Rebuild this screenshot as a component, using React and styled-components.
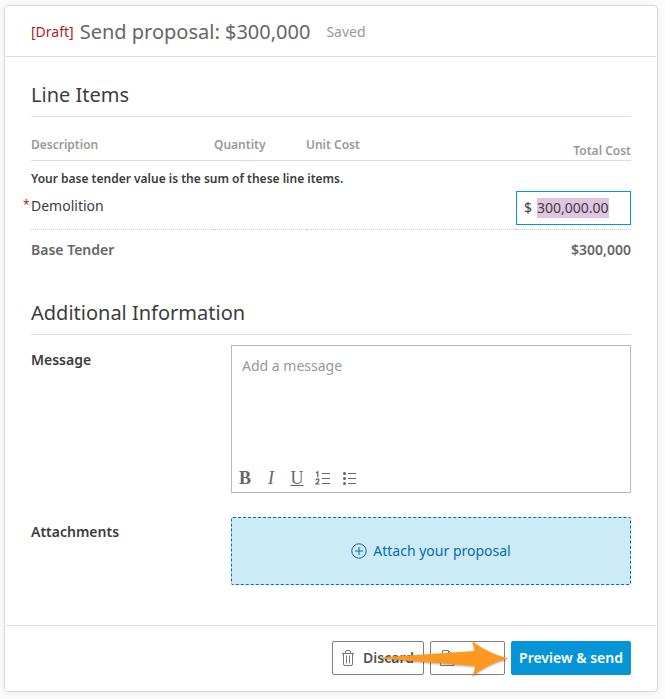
import React, { useEffect, useRef } from 'react'
import styled, { createGlobalStyle, css } from 'styled-components';

const GlobalStyle = createGlobalStyle`
  * {
    box-sizing: border-box;
  }
  body {
    margin: 0;
    background: #fbfbfc;
    color: #3c3c3c;
    font-family: "Noto Sans", "Open Sans", sans-serif;
    font-size: 14px;
    line-height: 20px;
  }
  button, input, textarea {
    font-family: inherit;
    font-size: inherit;
    line-height: inherit;
    color: inherit;
  }
`

const TrashIcon = () => (
    <svg width="12" height="16" viewBox="0 0 12 16" fill="none" stroke="#777" aria-hidden="true">
        <path d="M0 3.5h12M3.5 3.5v-1.5q0-1.5 1.5-1.5h2q1.5 0 1.5 1.5v1.5M1.5 3.5v10.5q0 1.5 1.5 1.5h6q1.5 0 1.5-1.5v-10.5M4.5 5.5v8M7.5 5.5v8" />
    </svg>
)

const SaveIcon = () => (
    <svg width="15" height="16" viewBox="0 0 15 16" fill="none" stroke="#777" aria-hidden="true">
        <path d="M2.5 10v-9.5h6l4 4v5.5M8.5 0.5v4h4M0.5 10.5h2.5l1 2h6l1-2h3v5h-13.5z" />
    </svg>
)

const PlusIcon = () => (
    <svg width="16" height="16" viewBox="0 0 16 16" fill="none" stroke="currentColor" aria-hidden="true">
        <circle cx="8" cy="8" r="7.2" />
        <path d="M8 4v8M4 8h8" />
    </svg>
)

const NumberedIcon = () => (
    <svg width="16" height="14" viewBox="0 0 16 14" fill="none" stroke="#666" aria-hidden="true">
        <path strokeWidth="1.3" d="M1 2l1.8-1.2v5.4M0.9 9.3q0.2-1.4 1.6-1.4t1.5 1.2q0 0.9-1.2 2l-1.8 1.8h3.4" />
        <path d="M7 2.500h8M7 7.500h8M7 12.500h8" />
    </svg>
)

const BulletIcon = () => (
    <svg width="16" height="14" viewBox="0 0 16 14" fill="none" stroke="#666" aria-hidden="true">
        <path d="M7 2.500h8M7 7.500h8M7 12.500h8" />
        <g fill="#666" stroke="none">
            <circle cx="3.500" cy="2.500" r="1.500" />
            <circle cx="3.500" cy="7.500" r="1.500" />
            <circle cx="3.500" cy="12.400" r="1.500" />
        </g>
    </svg>
)

const App = () => {
    const amount = useRef(null);

    useEffect(() => {
        amount.current.focus();
        amount.current.select();
    }, []);

    return (
        <>
            <GlobalStyle />
            <Card>
                <Header>
                    <Draft>[Draft]</Draft>
                    <Title>Send proposal: $300,000</Title>
                    <Saved>Saved</Saved>
                </Header>
                <Content>
                    <SectionTitle>Line Items</SectionTitle>
                    <Table>
                        <thead>
                            <tr>
                                <HeadCell $width="183px">Description</HeadCell>
                                <HeadCell $width="92px">Quantity</HeadCell>
                                <HeadCell>Unit Cost</HeadCell>
                                <HeadCell $width="115px" $total>Total Cost</HeadCell>
                            </tr>
                        </thead>
                        <tbody>
                            <tr>
                                <NoteCell colSpan="4">Your base tender value is the sum of these line items.</NoteCell>
                            </tr>
                            <tr>
                                <ItemCell colSpan="3">
                                    <Required>*</Required>
                                    <label htmlFor="demolition">Demolition</label>
                                </ItemCell>
                                <AmountCell>
                                    <AmountBox>
                                        <span>$</span>
                                        <AmountInput id="demolition" ref={amount} defaultValue="300,000.00" />
                                    </AmountBox>
                                </AmountCell>
                            </tr>
                        </tbody>
                        <tfoot>
                            <tr>
                                <TotalCell colSpan="3">Base Tender</TotalCell>
                                <TotalCell $right>$300,000</TotalCell>
                            </tr>
                        </tfoot>
                    </Table>
                    <SectionTitle>Additional Information</SectionTitle>
                    <Fields>
                        <Field>
                            <FieldLabel htmlFor="message">Message</FieldLabel>
                            <Editor>
                                <Message id="message" placeholder="Add a message" />
                                <Toolbar>
                                    <Tool type="button" aria-label="Bold"><b>B</b></Tool>
                                    <Tool type="button" aria-label="Italic"><i>I</i></Tool>
                                    <Tool type="button" aria-label="Underline"><u>U</u></Tool>
                                    <Tool type="button" aria-label="Numbered list"><NumberedIcon /></Tool>
                                    <Tool type="button" aria-label="Bulleted list"><BulletIcon /></Tool>
                                </Toolbar>
                            </Editor>
                        </Field>
                        <Field>
                            <FieldLabel htmlFor="attach">Attachments</FieldLabel>
                            <Attach id="attach" type="button">
                                <PlusIcon />
                                Attach your proposal
                            </Attach>
                        </Field>
                    </Fields>
                </Content>
                <Footer>
                    <Button type="button"><TrashIcon />Discard</Button>
                    <Button type="button" $narrow><SaveIcon />Save</Button>
                    <Button type="button" $primary>Preview &amp; send</Button>
                    <Arrow width="128" height="40" viewBox="0 0 128 40" aria-hidden="true">
                        <path d="M0 16.5L93.500 10Q93.500 5 91 0Q106 12 127 17.500Q106 23 91 35.500Q93.500 31 94.500 25L0 17.500z" fill="#ff981f" />
                    </Arrow>
                </Footer>
            </Card>
        </>
    )
}

const Card = styled.main`
  margin: 5px 7px 7px 4px;
  background: #fff;
  border: 1px solid #d9d9d9;
  border-radius: 4px;
  box-shadow: 0 1px 6px rgba(0, 0, 0, 0.06);
`
const Header = styled.header`
  display: flex;
  align-items: center;
  margin: 0 1px;
  padding: 12px 25px 10px;
  border-bottom: 1px solid #dcdcdc;
`
const Draft = styled.span`
  color: #aa1e23;
`
const Title = styled.h1`
  margin: 0 16px 0 6px;
  color: #666;
  font-size: 20px;
  font-weight: 400;
  line-height: 28px;
`
const Saved = styled.span`
  color: #999;
`
const Content = styled.div`
  padding: 0 26px 40px;
`
const SectionTitle = styled.h2`
  margin: 26px 0 0;
  padding-bottom: 9px;
  border-bottom: 1px solid #dcdcdc;
  font-size: 20px;
  font-weight: 400;
  line-height: 24px;
`
const Table = styled.table`
  width: 100%;
  table-layout: fixed;
  border-collapse: collapse;
  margin-bottom: 31px;
`
const HeadCell = styled.th`
  width: ${props => props.$width || 'auto'};
  padding: ${props => props.$total ? '25px 0 0' : '19px 0 6px'};
  border-bottom: 1px solid #dcdcdc;
  color: #999;
  font-size: 12px;
  font-weight: 600;
  line-height: 18px;
  text-align: ${props => props.$total ? 'right' : 'left'};
`
const NoteCell = styled.td`
  padding: 9px 0 3px;
  font-size: 12px;
  font-weight: 600;
  line-height: 18px;
`
const ItemCell = styled.td`
  padding: 5px 0 0;
  border-bottom: 1px dotted #ccc;
  vertical-align: top;
`
const Required = styled.span`
  float: left;
  width: 8px;
  margin-left: -8px;
  color: #c02026;
  font-size: 12px;
  line-height: 18px;
`
const AmountCell = styled.td`
  padding: 0 0 4px;
  border-bottom: 1px dotted #ccc;
`
const AmountBox = styled.div`
  display: flex;
  align-items: center;
  gap: 5px;
  height: 34px;
  padding: 0 7px;
  border: 1px solid #0696d7;
`
const AmountInput = styled.input`
  flex: 1;
  min-width: 0;
  padding: 0;
  border: 0;
  outline: 0;
  background: none;
  &::selection {
    background: #dfc5df;
    color: #3c3c3c;
  }
`
const TotalCell = styled.td`
  padding: 10px 0;
  color: #666;
  font-weight: 600;
  text-align: ${props => props.$right ? 'right' : 'left'};
`
const Fields = styled.div`
  display: grid;
  gap: 24px;
  padding-top: 10px;
`
const Field = styled.div`
  display: grid;
  grid-template-columns: 1fr 2fr;
`
const FieldLabel = styled.label`
  padding-top: 5px;
  font-weight: 600;
`
const Editor = styled.div`
  display: flex;
  flex-direction: column;
  height: 148px;
  border: 1px solid #b9b9b9;
`
const Message = styled.textarea`
  flex: 1;
  padding: 10px;
  border: 0;
  outline: 0;
  resize: none;
  &::placeholder {
    color: #9298a6;
  }
`
const Toolbar = styled.div`
  display: flex;
  gap: 2px;
  padding: 0 1px 2px;
`
const Tool = styled.button`
  display: flex;
  align-items: center;
  justify-content: center;
  width: 24px;
  height: 24px;
  padding: 0;
  border: 0;
  background: none;
  color: #666;
  font-family: "Liberation Serif", serif;
  font-size: 18px;
`
const Attach = styled.button`
  display: flex;
  align-items: center;
  justify-content: center;
  gap: 6px;
  height: 68px;
  border: 1px dashed #006eaf;
  border-radius: 2px;
  background: #cdeaf7;
  color: #006eaf;
`
const Footer = styled.footer`
  position: relative;
  display: flex;
  justify-content: flex-end;
  gap: 6px;
  margin: 0 1px;
  padding: 15px 25px 16px;
  border-top: 1px solid #dcdcdc;
`
const Button = styled.button`
  display: flex;
  align-items: center;
  justify-content: center;
  gap: 9px;
  width: ${props => props.$narrow ? '75px' : '92px'};
  height: 34px;
  padding: 0;
  border: 1px solid #808080;
  border-radius: 2px;
  background: #fff;
  color: #555;
  font-weight: 600;
  white-space: nowrap;
  ${props => props.$primary && css`
    width: 120px;
    border-color: #0696d7;
    background: #0696d7;
    color: #fff;
  `}
`
// pointer laid over the buttons, its tip ends at the primary one
const Arrow = styled.svg`
  position: absolute;
  top: 15px;
  right: 147px;
  overflow: visible;
  filter: drop-shadow(0 1px 1px rgba(0, 0, 0, 0.35));
`
export default App;
